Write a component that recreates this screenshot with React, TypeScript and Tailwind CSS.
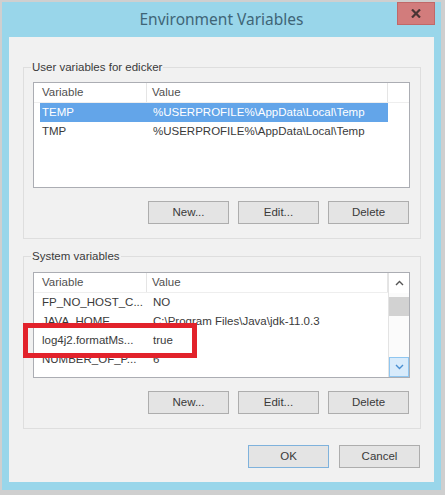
import React from "react";

const FONT = { fontFamily: '"Liberation Sans", Arial, sans-serif' };

function Btn({ label, primary }: { label: string; primary?: boolean }) {
  return (
    <div
      className={`w-[81px] h-[23px] flex items-center justify-center text-[11.5px] text-[#3a3a3a] bg-[#e4e4e4] border ${
        primary ? "border-[#7fb2dc]" : "border-[#adadad]"
      }`}
    >
      {label}
    </div>
  );
}

function Header() {
  return (
    <div className="flex h-[20px] items-center text-[11.5px] text-[#4f4f4f] border-b border-[#eeeeee]">
      <div className="w-[113px] h-full flex items-center pl-[8px] border-r border-[#e5e5e5]">Variable</div>
      <div className="w-[241px] h-full flex items-center pl-[5px] border-r border-[#e5e5e5]">Value</div>
    </div>
  );
}

function Row({ name, value, selected }: { name: string; value: string; selected?: boolean }) {
  return (
    <div
      className={`ml-[6px] w-[348px] h-[19px] flex items-center text-[11.5px] whitespace-nowrap overflow-hidden ${
        selected ? "bg-[#63a5e9] text-white" : "text-[#3a3a3a]"
      }`}
    >
      <div className="w-[107px] pl-[2px]">{name}</div>
      <div className="pl-[6px]">{value}</div>
    </div>
  );
}

export default function App() {
  return (
    <div className="w-[445px] h-[495px] bg-[#cfcfcf] flex pt-[2px] pl-[2px] overflow-hidden" style={FONT}>
      <div className="w-[439px] h-[488px] bg-[#99d6ea] flex flex-col relative">
        <div
          className="h-[35px] flex items-center justify-center text-[15.5px] text-[#3f6577]"
          style={{ fontFamily: '"Noto Sans", "Open Sans", sans-serif' }}
        >
          Environment Variables
        </div>
        <div className="absolute right-[6px] top-0 w-[38px] h-[23px] bg-[#d27c7c] border border-[#c06868] flex items-center justify-center">
          <svg width="10" height="9" viewBox="0 0 10 9">
            <path d="M1 0.5 L9 8.5 M9 0.5 L1 8.5" stroke="#4a3434" strokeWidth="2.2" />
          </svg>
        </div>
        <div className="flex-1 mx-[7px] mb-[8px] bg-[#f1f1f1] flex flex-col pl-[14px] pr-[13px] pt-[22px]">
          <fieldset className="w-[398px] border border-[#dedede] pl-[9px] pr-[10px] pt-[7px] pb-[14px]">
            <legend className="ml-[-2px] px-[1px] text-[11.5px] leading-[16px] text-[#3a3a3a]">
              User variables for edicker
            </legend>
            <div className="w-[377px] h-[106px] border border-[#abadb3] bg-white">
              <Header />
              <Row name="TEMP" value="%USERPROFILE%\AppData\Local\Temp" selected />
              <Row name="TMP" value="%USERPROFILE%\AppData\Local\Temp" />
            </div>
            <div className="flex justify-end gap-[9px] mt-[13px] mr-[1px]">
              <Btn label="New..." />
              <Btn label="Edit..." />
              <Btn label="Delete" />
            </div>
          </fieldset>
          <fieldset className="w-[398px] mt-[9px] border border-[#dedede] pl-[9px] pr-[10px] pt-[8px] pb-[14px]">
            <legend className="ml-[-2px] px-[1px] text-[11.5px] leading-[16px] text-[#3a3a3a]">System variables</legend>
            <div className="w-[377px] h-[106px] border border-[#abadb3] bg-white flex">
              <div className="w-[354px] overflow-hidden">
                <Header />
                <Row name="FP_NO_HOST_C..." value="NO" />
                <Row name="JAVA_HOME" value="C:\Program Files\Java\jdk-11.0.3" />
                <Row name="log4j2.formatMs..." value="true" />
                <Row name="NUMBER_OF_P..." value="6" />
              </div>
              <div className="w-[21px] flex flex-col border-l border-[#e3e3e3] bg-[#fbfbfb]">
                <div className="h-[20px] flex items-center justify-center bg-white">
                  <svg width="9" height="6" viewBox="0 0 9 6">
                    <path d="M1 5 L4.5 1.5 L8 5" stroke="#555" strokeWidth="1.4" fill="none" />
                  </svg>
                </div>
                <div className="mt-[4px] h-[19px] bg-[#d2d2d2]" />
                <div className="flex-1" />
                <div className="h-[20px] bg-[#d8ebfb] border border-[#8fc6f0] flex items-center justify-center">
                  <svg width="9" height="6" viewBox="0 0 9 6">
                    <path d="M1 1 L4.5 4.5 L8 1" stroke="#4a8fd1" strokeWidth="1.4" fill="none" />
                  </svg>
                </div>
              </div>
            </div>
            <div className="flex justify-end gap-[9px] mt-[13px] mr-[1px]">
              <Btn label="New..." />
              <Btn label="Edit..." />
              <Btn label="Delete" />
            </div>
          </fieldset>
          <div className="flex justify-end gap-[10px] mt-[16px] mr-[1px]">
            <Btn label="OK" primary />
            <Btn label="Cancel" />
          </div>
        </div>
      </div>
      <div className="absolute left-[23px] top-[323px] w-[174px] h-[35px] border-[5px] border-[#e2222b]" />
    </div>
  );
}
